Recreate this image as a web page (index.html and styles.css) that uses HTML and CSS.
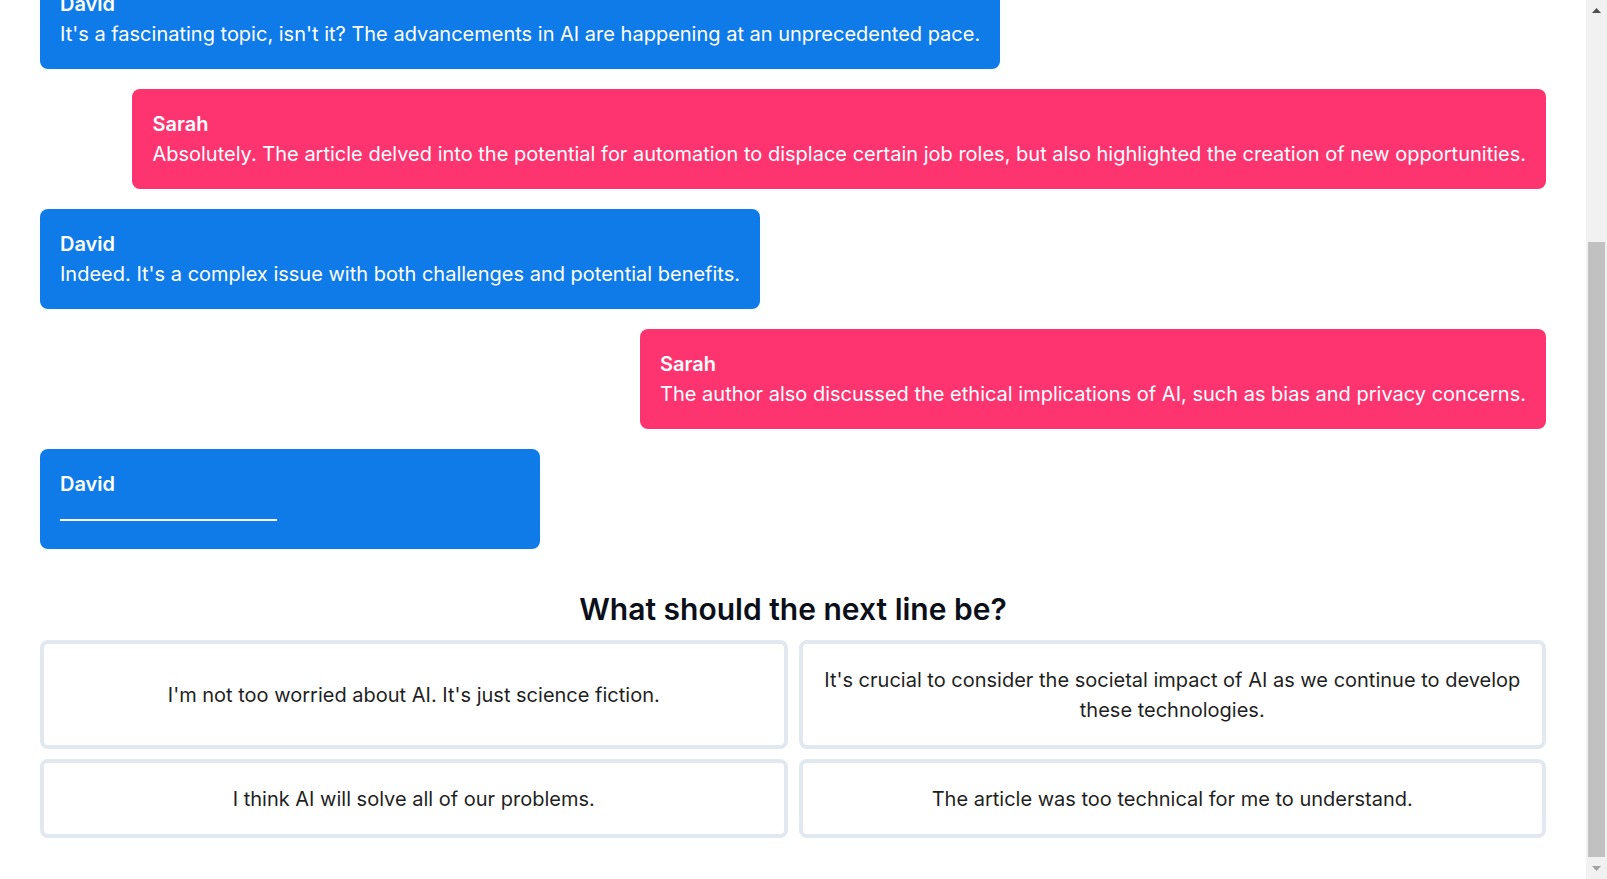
FILE: index.html
```html
<!DOCTYPE html>
<html lang="en">
<head>
<meta charset="utf-8">
<title>Conversation</title>
<link rel="stylesheet" href="styles.css">
</head>
<body>
<main class="page">
  <section class="chat">
    <div class="msg msg--david">
      <div class="msg__name">David</div>
      <div class="msg__text">Hi Sarah! Did you get a chance to read that article about artificial intelligence?</div>
    </div>
    <div class="msg msg--sarah">
      <div class="msg__name">Sarah</div>
      <div class="msg__text">Yes, I did! It really got me thinking about the future of work.</div>
    </div>
    <div class="msg msg--david">
      <div class="msg__name">David</div>
      <div class="msg__text">It's a fascinating topic, isn't it? The advancements in AI are happening at an unprecedented pace.</div>
    </div>
    <div class="msg msg--sarah">
      <div class="msg__name">Sarah</div>
      <div class="msg__text">Absolutely. The article delved into the potential for automation to displace certain job roles, but also highlighted the creation of new opportunities.</div>
    </div>
    <div class="msg msg--david">
      <div class="msg__name">David</div>
      <div class="msg__text">Indeed. It's a complex issue with both challenges and potential benefits.</div>
    </div>
    <div class="msg msg--sarah">
      <div class="msg__name">Sarah</div>
      <div class="msg__text">The author also discussed the ethical implications of AI, such as bias and privacy concerns.</div>
    </div>
    <div class="msg msg--david msg--pending">
      <div class="msg__name">David</div>
      <div class="msg__text"><span class="blank"></span></div>
    </div>
  </section>

  <h2 class="prompt">What should the next line be?</h2>

  <div class="options">
    <button class="option" type="button">I'm not too worried about AI. It's just science fiction.</button>
    <button class="option" type="button">It's crucial to consider the societal impact of AI as we continue to develop these technologies.</button>
    <button class="option" type="button">I think AI will solve all of our problems.</button>
    <button class="option" type="button">The article was too technical for me to understand.</button>
  </div>
</main>

<div class="scrollbar" aria-hidden="true">
  <div class="scrollbar__btn">
    <svg width="9" height="5" viewBox="0 0 9 5"><polygon points="0,5 9,5 4.5,0" fill="#505050"/></svg>
  </div>
  <div class="scrollbar__track">
    <div class="scrollbar__thumb"></div>
  </div>
  <div class="scrollbar__btn">
    <svg width="9" height="5" viewBox="0 0 9 5"><polygon points="0,0 9,0 4.5,5" fill="#a3a3a3"/></svg>
  </div>
</div>
<script src="script.js"></script>
</body>
</html>
```

FILE: styles.css
```css
html {
  background: #ffffff;
}

body {
  margin: 0;
  font-family: Inter, "Noto Sans", "Liberation Sans", sans-serif;
  color: #1a1a1a;
}

.page {
  padding: 40px 61px 41px 40px;
}

.chat {
  display: flex;
  flex-direction: column;
  align-items: flex-start;
  gap: 20px;
}

.msg {
  padding: 20px;
  border-radius: 8px;
  color: #ffffff;
  font-size: 20px;
  line-height: 30px;
}

.msg--david {
  background: #0e7be8;
}

.msg--sarah {
  background: #fe3470;
  align-self: flex-end;
}

.msg--pending {
  box-sizing: border-box;
  min-width: 500px;
}

.msg__name {
  font-weight: 600;
}

.blank {
  display: inline-block;
  width: 217px;
  border-bottom: 2px solid #ffffff;
}

.prompt {
  margin: 42px 0 13px;
  text-align: center;
  font-size: 30px;
  line-height: 36px;
  font-weight: 600;
  color: #0b0f19;
}

.options {
  display: grid;
  grid-template-columns: 1fr 1fr;
  gap: 10px 11px;
}

.option {
  border: 4px solid #e2e8f0;
  border-radius: 8px;
  background: #ffffff;
  padding: 20.5px 20px;
  font-family: Inter, "Noto Sans", "Liberation Sans", sans-serif;
  font-size: 20px;
  line-height: 30px;
  font-weight: 400;
  color: #1f1f1f;
  text-align: center;
  cursor: pointer;
}

/* decorative classic scrollbar drawn over the right edge */
.scrollbar {
  position: fixed;
  top: 0;
  right: 0;
  width: 21px;
  height: 100vh;
  background: #f1f1f1;
  display: flex;
  flex-direction: column;
}

.scrollbar__btn {
  height: 21px;
  flex: none;
  display: flex;
  align-items: center;
  justify-content: center;
}

.scrollbar__track {
  flex: 1;
  display: flex;
  flex-direction: column;
  justify-content: flex-end;
  padding: 0 2px 1px;
}

.scrollbar__thumb {
  height: 615px;
  background: #c1c1c1;
}
```

FILE: script.js
```js
window.scrollTo(0, document.documentElement.scrollHeight);
window.addEventListener('load', function () {
  window.scrollTo(0, document.documentElement.scrollHeight);
});
```
